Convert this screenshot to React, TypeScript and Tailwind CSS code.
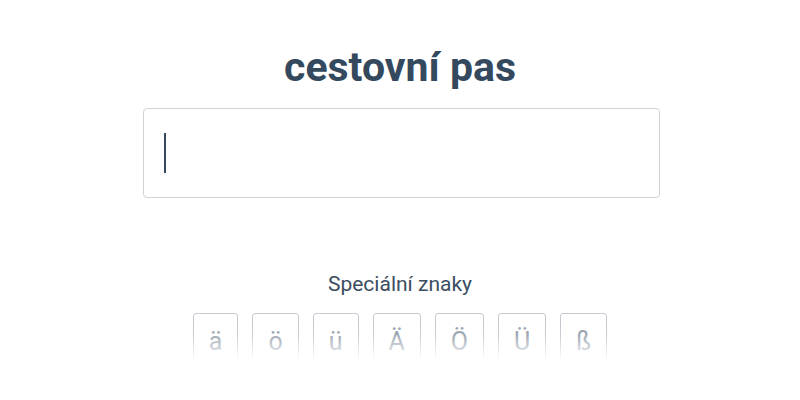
import React from "react";

const keys = ["ä", "ö", "ü", "Ä", "Ö", "Ü", "ß"];

export default function App() {
  return (
    <div
      className="w-[800px] h-[400px] overflow-hidden bg-white flex flex-col items-center"
      style={{ fontFamily: "Roboto, 'Liberation Sans', sans-serif" }}
    >
      <h1 className="mt-[42px] text-[41px] leading-[50px] font-bold text-[#34495e]">
        cestovní pas
      </h1>
      <div className="mt-[16px] ml-[2px] w-[517px] h-[90px] border border-[#d3d3d3] rounded-[4px] flex items-center pl-[20px]">
        <div className="w-[2px] h-[40px] bg-[#34495e]" />
      </div>
      <div className="mt-[74px] text-[21px] leading-[24px] text-[#3b4d61]">
        Speciální znaky
      </div>
      <div className="relative mt-[17px]">
        <div className="flex gap-[14px]">
          {keys.map((k) => (
            <div
              key={k}
              className="h-[60px] px-[15px] pt-[10px] border border-[#c5cbd1] rounded-[3px] text-[25px] leading-[36px] text-[#9aa5b0] bg-white flex justify-center"
            >
              {k}
            </div>
          ))}
        </div>
        <div className="absolute left-[-10px] right-[-10px] top-[20px] h-[28px] bg-gradient-to-b from-transparent to-white" />
        <div className="absolute left-[-10px] right-[-10px] top-[47px] h-[20px] bg-white" />
      </div>
    </div>
  );
}
